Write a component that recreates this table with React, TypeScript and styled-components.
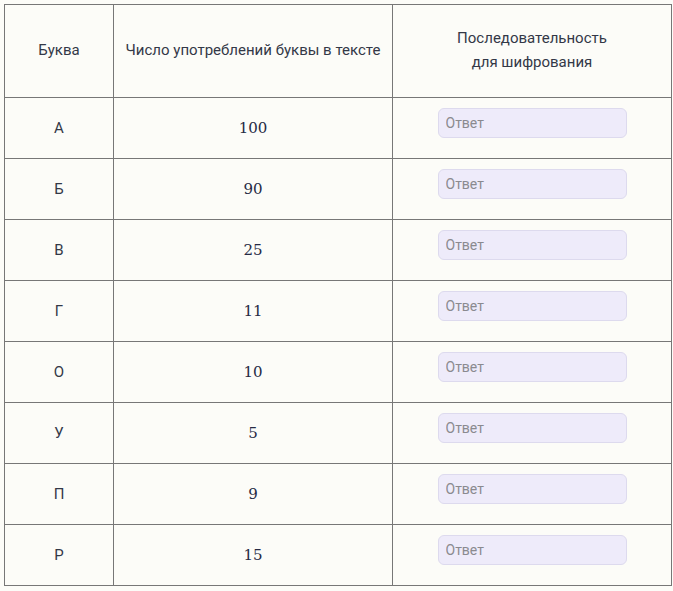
import React from "react";
import styled, { createGlobalStyle } from "styled-components";

const Global = createGlobalStyle`
  html, body { margin: 0; padding: 0; background: #fcfcf8; }
  body { padding: 4px 3px 0 4px; }
`;

const Table = styled.table`
  border-collapse: collapse;
  width: 667px;
  table-layout: fixed;
  background: #fcfcf8;
  font-family: Roboto, "Liberation Sans", Arial, sans-serif;
  color: #333847;
`;

const Col = styled.col<{ $w: number }>`
  width: ${(p) => p.$w}px;
`;

const HeadCell = styled.th`
  box-sizing: border-box;
  height: 93px;
  border: 1px solid #777;
  padding: 0 0 2px;
  font-weight: 400;
  font-size: 15px;
  line-height: 24px;
  text-align: center;
  vertical-align: middle;
`;

const Cell = styled.td<{ $serif?: boolean }>`
  box-sizing: border-box;
  height: 61px;
  border: 1px solid #777;
  padding: 0 0 1px;
  text-align: center;
  vertical-align: middle;
  font-size: 15px;
  font-family: ${(p) =>
    p.$serif ? `"DejaVu Serif", "Liberation Serif", serif` : `Roboto, "Liberation Sans", Arial, sans-serif`};
  color: ${(p) => (p.$serif ? "#262a44" : "#333847")};
`;

const InputWrap = styled.div`
  display: flex;
  justify-content: center;
  margin-top: -9px;
`;

const Answer = styled.input`
  width: 189px;
  height: 30px;
  box-sizing: border-box;
  border: 1px solid #dddaee;
  border-radius: 6px;
  background: #eeebfa;
  padding: 0 7px;
  font-family: Roboto, "Liberation Sans", Arial, sans-serif;
  font-size: 14px;
  color: #333;
  outline: none;
  &::placeholder {
    color: #8a8a8f;
  }
`;

const rows: [string, string][] = [
  ["А", "100"],
  ["Б", "90"],
  ["В", "25"],
  ["Г", "11"],
  ["О", "10"],
  ["У", "5"],
  ["П", "9"],
  ["Р", "15"],
];

export default function App() {
  return (
    <>
      <Global />
      <Table>
        <colgroup>
          <Col $w={109} />
          <Col $w={279} />
          <Col $w={279} />
        </colgroup>
        <thead>
          <tr>
            <HeadCell>Буква</HeadCell>
            <HeadCell>Число употреблений буквы в тексте</HeadCell>
            <HeadCell>
              Последовательность
              <br />
              для шифрования
            </HeadCell>
          </tr>
        </thead>
        <tbody>
          {rows.map(([l, n]) => (
            <tr key={l}>
              <Cell>{l}</Cell>
              <Cell $serif>{n}</Cell>
              <Cell>
                <InputWrap>
                  <Answer placeholder="Ответ" />
                </InputWrap>
              </Cell>
            </tr>
          ))}
        </tbody>
      </Table>
    </>
  );
}
